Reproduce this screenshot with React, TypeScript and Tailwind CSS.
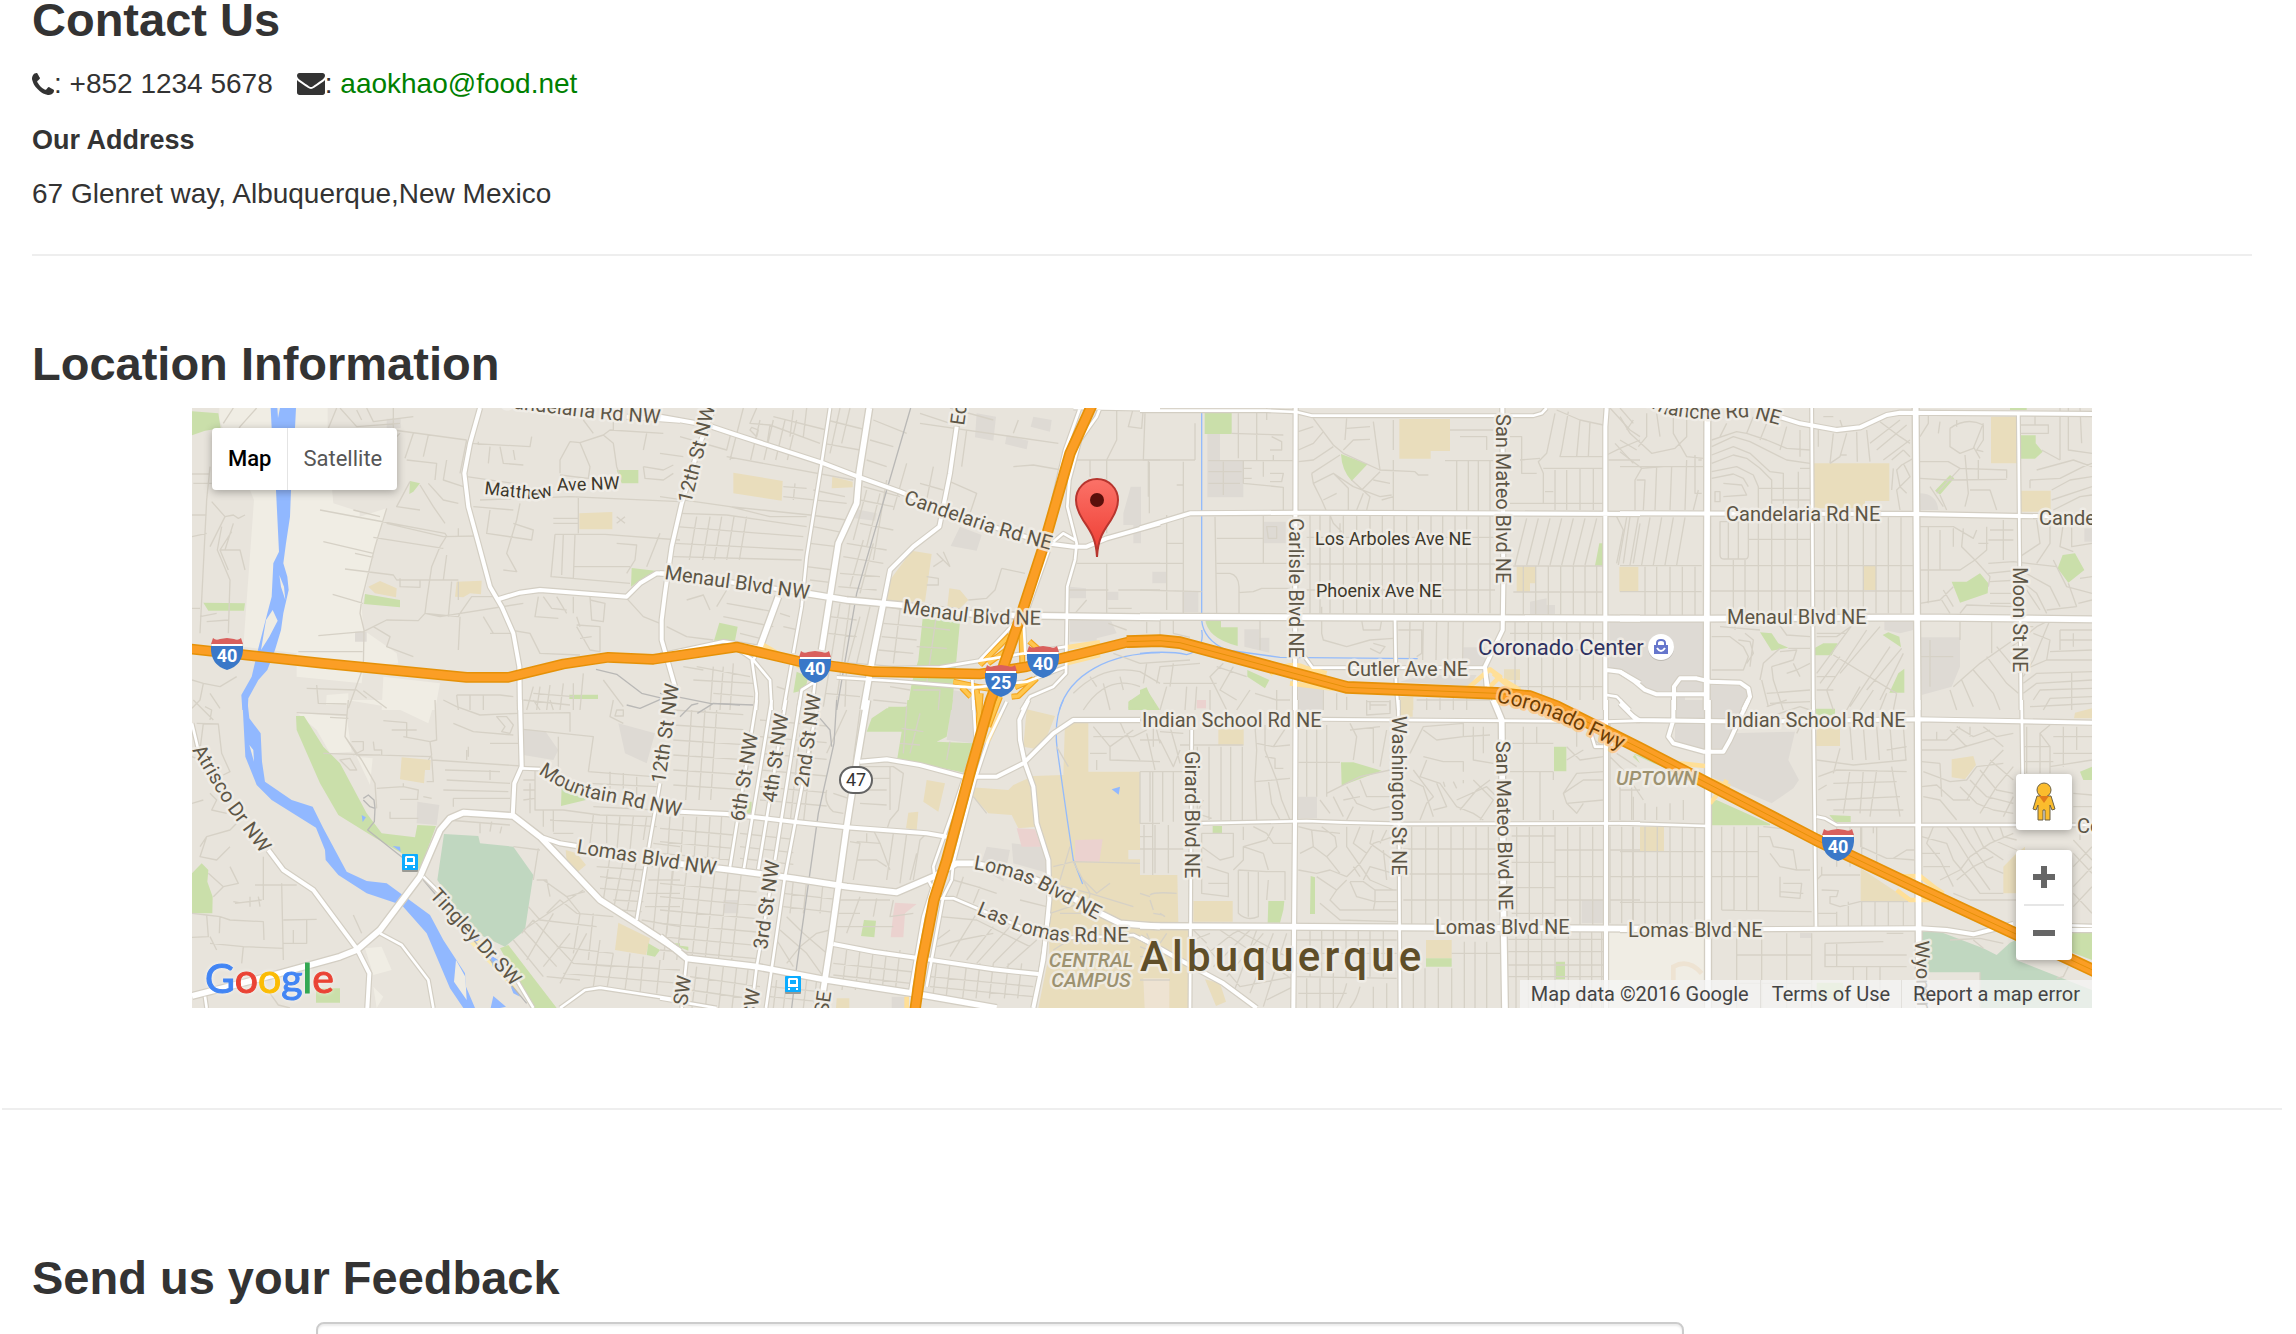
import React from "react";

/* ---------- Map data ----------
   The drawing is stored as eight sheets (4 columns x 2 rows) at three units per pixel. */

const vs = (xs: number[], y0: number, y1: number, skew = 0) =>
  xs.map((x) => `M${x} ${y0}L${x + skew} ${y1}`).join("");
const hs = (ys: number[], x0: number, x1: number, skew = 0) =>
  ys.map((y) => `M${x0} ${y}L${x1} ${y + skew}`).join("");

type Sheet = {
  x: number;
  y: number;
  light?: string;
  grey?: string;
  park?: string;
  school?: string;
  hospital?: string;
  golf?: string;
  water?: string;
  island?: string;
  canal?: string;
  rail?: string;
  minor: string;
  thin: string;
  mid: string;
  wide?: string;
};

const sheets: Sheet[] = [
  {
    x: 180,
    y: 400,
    light:
      "M118 24H443V120L460 310L539 335V350L620 325L585 440L545 620L550 690L650 760L655 790L550 800L545 850L350 830V760L190 740L222 300L210 270L118 60ZM610 830L780 850L765 930H605ZM440 885L505 880V915H438Z",
    grey: "M620 56h42v28h-42zM525 695h35v30h-35z",
    park: "M36 34L115 40L122 85L75 92L36 106ZM70 608L195 610L192 632L85 632ZM555 582L660 600V622L552 612ZM690 243L720 250L700 275L688 282ZM1310 210H1375V250H1325ZM1355 504L1425 512L1380 540L1353 560ZM1168 884h86v13h-86z",
    school:
      "M1198 340L1297 336V388H1198ZM565 560L600 543L650 565L648 592L585 580ZM830 545L905 542L903 583L870 580L850 592L825 590Z",
    water:
      "M272 24L348 24L345 84L333 270L330 350L318 430L310 490L322 530L326 570L310 640L303 690L285 750L262 810L235 840L205 895L203 930L187 930L184 885L215 830L235 745L262 640L275 590L280 490L297 455L288 270L275 84Z",
    island: "M278 630L293 662L268 710L243 750L258 660ZM298 525L312 560L316 600L303 560ZM292 24h8l-6 30z",
    minor:
      "M160 24L130 70M230 24L180 80L165 110M90 200L80 300L60 700M40 250H95M36 222H90M36 345H80M36 410L80 400M95 305L135 350L160 345L175 355L195 345M135 350L90 440M125 380L112 450L150 540L145 700M160 370L135 450M155 395L120 450L145 510M120 450H180L195 510M60 650L110 640M80 665L145 660M36 625H60M445 85L470 24M480 24L530 80L660 70M530 30L545 60M560 24L580 65L700 50M640 24V90L860 120M500 90L620 90M700 100L675 175M745 105L730 170M860 120L840 220M680 180L770 190L765 240M690 245L650 320L720 330M720 255L760 320L795 370M745 250L790 300L835 310M800 180L790 240L850 260M420 330L580 360L795 400L800 408L780 440L755 500L740 600L735 640M520 330L600 350M430 425L580 460M525 460L580 472M495 507L640 525L650 540L835 540M580 412L790 445M620 370L790 410L890 408M660 535V560L720 562V540M800 465L790 540M835 545V600M835 385V410M458 583L550 610M620 325L585 440L545 600L540 640L552 690L550 800L505 925M415 707L550 695L580 680L620 660L715 662L735 640L835 650L840 640L875 590L950 590M580 680L630 710L620 740L700 770M735 640L780 650L1030 610M815 545L805 650M840 650L835 750M355 755H548M870 130L1050 140L1055 110M895 125V135M930 140L925 190M960 140L970 190L1030 195M1000 150L1005 180M860 230L1000 250M900 300L1170 290L1500 305M880 320L1000 330M930 330L920 400L1055 420L1060 390L1000 370M1020 310L1010 360L980 460L1010 515L970 510M1195 290V400M1120 355H1195M1120 370H1195M1125 403H1275L1500 420M1125 403L1113 530L1180 535L1185 403M1150 403L1145 525M1180 500H1350M1115 530L1350 550M1440 400L1400 500M1310 430L1370 435L1365 480L1340 520M1310 350L1335 370M1335 350L1310 370M1170 125L1200 128L1270 105L1300 130L1310 200L1325 240M1170 125L1140 180V220M1200 128L1230 200L1225 235L1140 225M1270 105L1290 90L1450 100M1390 200L1450 210L1480 195M1390 200L1395 235L1450 240L1480 220M1300 90V50M1400 100L1390 150M1240 100L1210 60M1075 590L1065 650L1135 655M1090 590L1115 625L1160 630M1130 590L1160 640M1230 590L1235 660L1270 665L1275 610L1230 600M1180 590V640M1200 680L1190 650M1340 595L1390 650L1440 670M990 690L1050 700L1080 760L1200 765M1190 680L1230 750L1260 755V680L1190 675M1200 715L1235 710M380 865L530 870L560 895M410 855L415 910L500 912M550 872L620 925M640 120L660 100M36 840L70 850L60 900L36 925M70 850L120 860L170 830M90 880L120 925M830 885H960L1000 890M835 930L830 885M870 885V930M910 885V930M1060 860L1040 930M1080 860L1070 930M1110 855L1100 930M1150 850L1140 930M1180 850V930M1060 880L1180 890M1270 840L1330 920M1210 820L1200 930M930 700H1000M910 650L940 700",
    rail: "M1248 808L1310 823L1385 880L1448 895L1380 925L1340 915",
    thin: "",
    mid: "M900 24L870 130L853 220L865 320L895 430L930 560L965 620L1000 700L1018 800L1020 930M957 597L1020 578L1080 570L1340 590L1380 550L1430 520L1500 522M1340 50L1500 62",
  },
  {
    x: 660,
    y: 400,
    grey: "M950 40L1008 50L1000 122L945 112ZM1040 105L1105 122L1100 148L1035 132ZM1120 50L1175 60L1170 95L1112 80ZM590 328L650 340L645 362L585 355ZM900 380L965 405L950 452L872 438ZM1412 260H1443V430H1420V375H1390V340ZM1230 560L1278 565V595H1230ZM1230 655H1350L1370 700L1310 715V725H1230ZM1340 575h35v25h-35zM875 870L940 880V930H870Z",
    park: "M788 655L900 665L875 930H742L755 850L775 780ZM178 668L233 680L225 722L162 722ZM410 815L445 830L435 870L400 878ZM1405 905L1460 868L1500 930H1405ZM685 920H740V930H685Z",
    school:
      "M220 218L368 243L365 302L220 280ZM517 230L578 245V262L515 265ZM755 452L815 462L795 605H680L690 540ZM868 565L900 570L925 600L900 625L862 620Z",
    canal: "M1500 758C1350 760 1230 820 1198 930",
    rail: "M752 24L590 580L530 930M0 880L150 910L280 915",
    minor:
      vs([110, 150, 185, 222, 260], 350, 480, -22) +
      vs([300, 340, 375, 410], 60, 180, -28) +
      "M250 24L210 180M290 24L270 70L330 75L480 130M270 90L290 110L295 90L275 82ZM340 50L500 90M400 30L390 110M440 24L430 110M330 75L320 140M0 160L70 170M60 110L200 150L215 90M200 170L580 240M0 290L210 320M210 320L450 345L560 360M60 340L200 345L440 380M210 320L330 350L440 350M50 380L430 410M45 430L430 450M40 470L425 480M370 260L440 265M405 250L400 300M370 290L560 310M460 270L555 290M460 380L560 400M450 430L530 440M440 500L520 510M450 540L515 548M540 24L510 160M570 24L545 130M500 60L620 90M490 130L600 150M640 60L740 100M630 120L700 140M620 180L680 200M610 260L720 290M600 300L700 320M600 370L700 390M560 430L680 450M550 470L670 490M540 520L660 530M535 560L650 570M620 270L580 420M660 280L620 440M740 190L700 330M680 240L640 480M610 420L570 560M640 430L600 580M780 70L1195 130M780 40L900 80M920 90L905 200M870 245L950 280L930 340M820 200L800 300M780 250L850 270M870 24L1000 60M1060 200L1120 195L1205 210M1075 60L1060 100M850 455L870 500M800 530L835 535V555H800M830 460L850 480L820 500M870 500L840 470M1025 505L1095 520M1025 505L1005 570L980 595L925 600M1240 180H1500M1370 24V120L1340 180V400M1290 180V230M1465 180V290M1450 24L1445 85L1405 80L1420 24M1250 490H1500M1340 490V640M1225 570H1345M1375 570H1500M1345 625L1415 625M80 600L130 585L150 630M130 585L115 590M20 680L80 710L160 720M200 610L340 635M190 650L340 680M240 700L320 720M170 620L200 570M360 640L390 650M370 680L415 690M540 610L490 920M570 610L530 900M510 650L590 660M505 700L590 710M560 790L555 920M495 880L600 890M600 650L560 800M630 620L590 790M680 620L780 640M670 670L780 680M665 710L770 720M655 750L760 760M720 630L700 790M690 860L750 870M640 900L740 910M160 800L150 930M190 800L180 930M220 790L210 930M110 800L270 830M100 840L280 850M160 880L280 890M70 800L130 810M350 860L380 870M1245 640L1280 600M1240 880Q1330 790 1440 815L1500 850M1270 930Q1340 820 1440 860M1330 850L1350 930M1290 830L1310 860M1380 830L1390 870M780 680L870 690M770 740L860 745M755 800L850 800M830 640L800 850M760 870H840L835 930M1360 760L1440 790M1345 670L1400 690",
    thin: "M510 24L485 188L440 470L425 620L400 760M355 590L300 740L280 780L330 840L335 930M275 775L290 880L288 930M230 745L280 780M395 790L370 930M415 930L425 870L465 845L455 930M1260 24L1215 150L1180 300M1320 24L1310 50L1260 120L1228 240L1222 320L1250 430L1245 480L1222 560L1218 820L1180 860L1110 890L1085 930M1180 425L1210 400L1245 420M0 765L190 724L300 742M530 792L700 805L840 802L940 785L1080 762L1218 740M530 832L700 843L940 863L1100 845L1218 800M1240 24L1500 28M955 785L1040 695L1080 650M1090 650L1096 765M937 840L940 920V930M1170 440L1095 650",
    mid: "M0 50L140 75L230 105L485 188L600 232L720 275L900 350L1160 430L1240 440L1280 440L1340 415L1500 370M890 80L870 220L838 380L760 440L690 510L670 610M0 520L200 545L440 580M155 40L120 130L65 310L35 440L15 580L5 660L5 720L45 860",
    wide: "M628 24L598 215L590 310L535 430L510 590L485 750M440 580L560 600L720 615L960 645L1500 652M670 610L640 760L610 930M355 590L300 740",
  },
  {
    x: 1140,
    y: 400,
    grey: "M202 100h38v80h70v112H202ZM372 365h65v65h-65zM37 515h42v35H37zM127 575h48v62h-48zM313 688h45v25h30v45L313 740zM1170 605l50-10v20h25v28h-75zM1408 660H1500V860L1408 810ZM475 860H548V930H475ZM970 742h65v55h-65zM780 845L850 825H1010L990 858Z",
    park: "M194 35H275V102H194ZM603 162L683 192L635 243Q605 210 603 162ZM195 655H243V682H293V738Q200 715 195 655ZM322 810L388 840L375 865L322 830ZM1378 430H1390V497H1365ZM0 870L20 862L48 930H0Z",
    school:
      "M778 57H930V153H872V176H778ZM1130 500H1187V550H1170V575H1130ZM1438 500H1495V575H1438ZM1092 808H1140V840H1092ZM775 890H820V930H775Z",
    canal: "M185 34V660Q190 720 260 750L420 772L833 776M0 760Q90 752 140 764Q195 750 185 690",
    minor:
      vs([510, 540, 570, 610, 650, 690, 727, 762, 800, 835, 873, 908, 945, 980, 1015, 1050], 345, 640) +
      hs([412, 492, 570], 500, 1065) +
      vs([950, 985, 1015, 1050], 180, 335) +
      vs([1150, 1187, 1225, 1262, 1300, 1335, 1370], 500, 645) +
      vs([1160, 1195, 1230, 1265, 1300, 1335, 1370], 355, 495, -35) +
      hs([498, 576], 1120, 1390) +
      vs([810, 850, 890, 925, 970], 660, 780, -2) +
      vs([1125, 1165, 1205, 1240, 1280, 1320, 1360], 665, 900) +
      hs([700, 750, 860], 1110, 1390) +
      "M15 40L10 180H165M165 70V180M130 185V640M28 185V340M0 490H130M130 255H110M0 570L185 575M80 345V630M80 430H130M295 40V175M350 34V180M275 100L430 105M205 182H460M205 215H305M205 250H300M250 185V285M310 180V250L430 262V330M310 205H335M310 235H335M370 185V230M390 150H425V125L395 110M390 220H430L425 245H390M400 165V180M380 24V60M225 350L230 640M370 345V490M230 490H460M230 415H370M230 520H270Q295 525 297 560V640M295 578L340 575L365 565H450M380 380H410V415H385ZM520 55L580 135L610 160L720 210L825 215L835 225H865M475 95L520 80M475 150L520 130L550 95M475 185L520 180L580 140M515 220L600 165M515 220L520 250L545 300L560 335M520 250L580 220L640 260L720 290L755 285M580 220L625 265V330M550 300L590 280M620 55L615 120M620 85L690 80M700 65L710 140L720 210M610 150L640 120L690 118M635 240L690 290L680 330M665 270L720 215M700 240L750 250M650 330L670 280M760 180V330M760 60V150M725 300L760 290M930 90H1060M915 182H1060M960 110H1040V150M1110 110H1145V220H1190M1140 180L1200 175M1245 40L1220 160L1195 185L1210 220V310M1285 35L1265 150L1260 170H1390M1320 60L1310 170M1350 65L1345 170M1250 30L1320 60L1390 75M1210 205H1390M1215 275H1240M1110 310H1390M1245 210V330M1280 210V330M1320 205V330M1360 205V330M570 345L580 370L605 395M600 370V400M545 620V700L550 720L620 740L690 720L760 715M665 660L670 690H720L725 660M700 730L735 740L720 760L690 745M775 690H845V760L830 770M360 660V750M20 665V700M60 660V710M100 660V700L150 712M0 790L150 780M20 790L10 850M50 850L60 800L180 790M70 850H230M100 790L90 860M60 930L80 860M140 860L135 930M170 860L165 930M210 870V930M250 790L210 830L260 930M280 800L240 870L290 900M330 870L290 930M230 800L320 830M345 880L410 900V930M410 870V900H450M550 870V930M590 880V930M620 890V930M680 905H750V930M690 905V930M830 900H1050M860 895V930M900 895V930M940 895V930M980 895V930M1400 165L1440 145L1500 120M1410 24L1470 90L1500 110M1440 24L1480 70M1405 180H1500M1425 130L1480 190M1430 350L1450 390L1430 490M1470 350L1450 490M1500 370L1480 490",
    thin: "M0 32H380L470 36L515 47H1180L1205 40L1220 24M490 765L518 803H1035M765 655L768 850L775 930M1035 800L1045 860L1075 930M1400 885L1430 890L1470 930",
    mid: "M0 385L150 340L500 338L1500 342M1087 24L1090 550L1088 690L1035 800L1040 860M1400 24L1396 80V930M1400 810L1440 815L1500 850M467 24L465 930",
    wide: "M0 650L1500 656",
  },
  {
    x: 1620,
    y: 400,
    grey: "M0 662H245L260 690V885H110L45 845L0 815ZM170 890H195V930H170ZM270 852H360L388 870L380 905L360 930H270ZM898 280Q950 280 955 330H898ZM897 712H1020V800L995 860L905 885ZM793 660H880V690L840 700L793 690ZM1393 385h23v40h-23z",
    park: "M1203 106H1247V130L1268 155L1245 176H1203ZM945 272L990 225L1003 235L960 284ZM420 697L455 700L475 730L505 743L455 752ZM583 745L610 730H653L635 766H583ZM788 705L805 697L838 710L843 742ZM853 806V878H808L835 820ZM995 545H1040L1080 520L1105 550L1103 580L1020 608ZM1313 505L1328 465L1365 460L1393 510L1345 548ZM1170 24h50v6h-50z",
    school: "M582 190H808V303H735V325H582ZM1113 50H1190V190H1113ZM1203 272H1292V335H1203ZM730 495H768V570H730Z",
    minor:
      vs([340, 375, 415, 455, 495, 532], 480, 640) +
      vs([613, 650, 685, 730, 768, 805, 843], 352, 640) +
      vs([415, 455, 495, 532], 352, 480) +
      hs([497, 573], 270, 880) +
      vs([75, 110, 150, 187, 225], 500, 645) +
      vs([20, 55, 90, 125, 160, 195], 352, 495, -25) +
      hs([497, 575], 0, 245) +
      "M300 365V465Q300 478 315 477H375Q385 477 385 465V365ZM325 365V475M355 365V475M385 418H570M0 50L30 100L95 160L165 145L200 110V40M80 40V110L55 140M160 40V100L200 170L250 175M110 40L120 110M40 60L20 90M0 120L50 150M0 155L65 205L45 240V330M0 200H250M65 205L130 200M50 240L75 240L70 330M110 200L105 330M155 200L150 330M200 180L195 330M225 165V280H245M235 180H245M235 270L220 330M275 140L340 110L390 125L500 180L570 190M275 120L350 95L380 100L440 120L500 145L570 150M275 165L340 140L390 160L450 215L490 220V330M275 190L340 165L380 175L420 205L455 240V330M275 215L350 200L400 225L415 260V330M275 235L340 222L370 235L385 260M285 275H300V305H285ZM310 250L365 255L380 285L310 290M320 70L300 110M400 50L380 100M440 70L420 120M500 80L480 150M540 90V170M535 215V330M415 265H570M455 300H570M540 205H570M595 80V140M640 100L630 190M680 100L660 170L630 190M660 165H680M710 95L712 185M740 90L750 185M780 65L840 110L870 130M840 60L750 130M860 75L770 150M870 120L790 180M850 150L870 170M660 60L670 90M610 50H640M880 175L845 195L830 210L840 260L860 280M850 190L870 230L830 270L840 330M815 180L850 150M820 205L815 270M925 45V70L900 110M960 65L955 100M990 85Q1040 50 1090 75V120L1070 150L1090 155M990 85V140L1020 160L1060 145L1090 70M1060 140L1080 175M1010 60V80M900 185H985L1020 205L950 280M1035 165L1045 280L1035 320M1020 205L1160 210V235M900 235L980 240L1160 238M1050 270H1110L1130 330M1075 180V240M960 285L980 330M930 260L970 320M1203 75H1285V100H1203M1245 45V75M1320 24V180M1345 24V150L1416 160M1380 24L1385 130M1265 150L1320 180M1250 210L1360 180L1416 200M1230 240L1320 235L1390 200L1416 190M1230 265V240M1295 270L1350 240L1416 230M1295 300L1416 260M1300 330L1380 290L1416 285M900 380H1000L1060 415L1070 390M1030 385L1025 440L1065 480L1100 450V380M960 390V510M925 380V610M1000 385V440M900 510H1020L1065 480M1065 480L1110 530L1105 560M1105 420H1180M1075 430H1105M1150 360V480M1110 390H1180M1250 360L1260 430L1200 470M1290 360V430L1250 490M1330 370L1320 440L1360 455M1355 380V440L1416 430M1105 490L1180 485L1310 500M1105 520L1200 510L1290 560L1320 620M1110 545L1200 540L1250 580L1280 640M1110 580H1180M1110 610H1180M1220 570L1260 630M1345 550L1370 620M1300 480L1340 560L1416 580M1380 535L1416 530M1375 610L1416 600M900 610L960 600L1000 560M965 600L990 640M970 570L1000 620M1020 640L1040 615L1180 620M1280 630L1370 620M275 710H330L370 740L385 770L370 810H275M355 720L390 725L400 760L380 790M300 680L420 690M345 660V690M375 700L400 720L390 800M475 670L500 705L570 710M505 745H570M420 840L430 790L480 745M455 800L520 780L530 750L480 755M425 840L445 920M455 800L460 840L490 930M520 790L540 830M500 820L530 810L570 790M440 880L570 870M450 910L570 905M590 710H650L720 660M590 700H680M640 765L830 880M700 670L590 820M740 690L620 870L640 930M780 680L660 820M810 740L690 920M845 745L740 870M850 760L780 900M660 770L600 850M590 830H645M590 870H640M720 860L680 930M760 870L720 930M800 880L780 930M830 880L820 930M1020 660V720M1115 665V760M900 770H1000M930 720V860M1210 680H1240M1175 740L1250 680L1290 660M1000 860L1080 790L1180 720M1060 810L1120 880L1140 930M1100 770L1160 850L1195 880M1130 740L1180 800M1025 840L1060 920M1290 660L1240 780L1210 830M1240 700L1290 720L1280 780L1210 810M1320 690H1416M1320 720H1416M1290 755L1416 750M1280 780H1416M1320 690V750M1360 700V740M1210 850L1250 820L1416 815M1210 880L1250 850L1416 840M1240 900L1260 870L1416 865M1270 930L1290 895L1416 890M1355 815V930M990 870L1010 930",
    thin: "M575 24L580 930M1195 40L1203 930",
    mid: "M0 340L887 342L1196 348L1416 350M460 45L540 70L650 90L720 82L800 45L840 38L1416 42M0 815L45 845L75 870L110 883H260M162 930V860L180 835H230L270 845L360 848L385 865L390 890L370 930",
    wide: "M262 40L260 930M887 24L893 930M0 656H260L887 652L1416 658",
  },
  {
    x: 180,
    y: 700,
    light:
      "M500 0H765L745 70L650 25ZM350 38L500 50L515 155L450 160L410 90ZM530 170L578 175L570 255ZM555 745L605 740L635 810L580 825ZM580 860L610 890L590 924Z",
    grey: "M712 305L778 315L770 375L710 370ZM1030 88L1097 95L1135 150L1120 180L1030 165ZM1315 70L1425 100L1400 190L1335 160Z",
    park: "M348 48H372L430 140L480 190L560 340L605 400L705 412L712 375L768 378L720 510L665 460L580 410L475 345L420 250L350 90ZM36 520L65 490L85 510L82 545L98 590L97 640H36ZM1145 255L1218 290V300L1143 318ZM985 735L1130 924H1060L960 745ZM408 865H480V908H408ZM1405 730L1440 750L1425 770L1400 765ZM1475 730H1500V750Z",
    school:
      "M665 172L752 180L750 210L735 210L732 250L660 238ZM1315 668L1410 715L1398 765L1305 750ZM1157 450L1190 460L1218 495L1190 518L1160 485Z",
    golf: "M792 402L895 408L900 430L1000 440L1060 525L1035 690L975 740L870 690L772 540Z",
    water:
      "M187 0H202L208 55L242 100L246 185L255 245L335 300L398 320L430 385L500 515L560 543L620 550L750 645L790 720L855 820L858 860L885 924H850L810 865L740 700L665 615L560 580L475 525L437 480L435 450L408 383L275 300L230 255L196 170ZM545 345L558 352L548 366ZM638 438L660 440L662 455ZM930 765L970 790L965 820L935 795ZM985 840L1020 890L1000 880ZM940 888L978 920L960 924H932ZM860 700L900 710L890 730Z",
    island: "M208 135L220 150L222 185ZM828 780L856 830L860 900L822 845Z",
    rail: "M550 295L565 285L582 300L585 325L570 320L550 300M585 325L583 365L563 390L670 475M730 540L1040 910",
    minor:
      "M40 0L100 60M75 20L95 30L90 60M50 70L115 72L125 160L150 215L130 225M70 70L60 150M36 170L90 190M90 280L110 300L95 330L140 340M36 310L70 300M60 440L80 410L150 390L170 370M80 410L60 470L110 480L150 440M85 520L130 560L175 550L150 500M130 560L100 590M250 470V600M165 610L245 600M210 590V620M160 605L190 610M225 555H350M305 550L310 780M235 590L240 620M36 640L80 645L85 710L36 712M80 645L120 650L150 660L250 665L252 720M120 650L118 700M90 730L190 740L310 745M90 710L110 750M310 660L410 658M340 690V730M380 660V730H310M190 740L185 790M520 645L545 700M270 880L295 915L330 924M505 0L495 110L530 165H600M350 38L500 45M450 52L505 55M610 62L680 68V110M635 90H710M670 110L750 125L770 120L765 0M750 125L755 165L745 180M495 110L545 180M515 125H550V150L520 165M580 125L583 150H605V165M545 180L585 250L590 325M430 160L755 170L760 245H740M480 180L510 175L530 210H510ZM590 265L670 260L715 270L712 300M670 260V250M660 298H715M630 335V355H715M730 290L755 295M755 180L1025 198M795 210L960 215M800 240L990 250M790 270L985 275M820 295H990M860 150V180M820 70L880 95L1000 105M930 130L1015 130M865 140V170M830 20L900 45L1015 40M790 0L830 20M930 210V240M950 50L975 80L965 95L990 100L1000 75L980 50ZM820 295V320M900 370V400M935 365L930 395M965 380L960 400M800 360L990 375M1030 0L1170 15M1030 40L1170 38V95M1060 0L1080 30M1110 0L1120 30M1310 30H1330V48H1305ZM1300 0L1290 50L1330 70M1030 88L1240 110L1225 215M1030 240H1065M1030 270H1065M1030 300L1065 295M1065 210V330L1150 330M1135 110V230M1050 250V340M1090 330V380M1120 330V395M1225 215L1420 230M1225 250L1430 260M1240 320L1430 330M1290 215V270M1330 220V280M1370 230V290M1150 330L1260 345L1420 350M1110 360L1430 380M1120 400H1180M1240 345L1230 430M1280 345V430M1320 345L1310 460M1360 350L1350 450M1400 350L1390 420M1250 500L1395 510M1260 530L1395 545M1260 565L1390 575M1300 600L1390 605M1320 630L1385 635M1290 470L1270 600M1330 480L1300 630M1370 480L1340 640M1420 430L1500 440M1415 500H1500M1405 540H1500M1400 580H1500M1395 620H1500M1385 660L1500 680M1440 480L1420 690M1480 480L1460 700M1000 440L1080 450M1075 445L1060 540M1070 540H1100L1110 590M1090 540L1160 590L1215 575M1030 690L1210 570M1025 700L1060 660M1045 620L1080 660L1250 680M1100 640L1140 600L1190 640L1300 650M1160 590L1200 640M1200 640L1180 760M1240 640L1225 780M1060 660L1180 790L1300 800M1030 690L1130 800M1000 720L1090 830M1120 640L1040 780M1170 700L1090 800M1220 700L1140 850M1260 720L1240 860M1300 760L1280 870M1350 760L1335 870M1390 770L1380 880M1440 780L1430 880M1130 740L1300 760M1180 790L1500 810M1150 820L1500 850M1100 830L1200 840",
    thin: "M36 70L55 150M1025 205L1080 207M1440 250L1410 420L1370 660M730 530L790 590M1010 840L1060 924M1140 924L1215 870L1260 863L1500 900M75 890L80 924M600 700L665 735L745 840L760 924",
    mid: "M265 450L310 510L400 570L530 745L568 820L562 924M1080 410L1140 430L1190 438M1020 0L1025 200L1003 250L998 350",
    wide: "M36 888L300 820L480 770L530 750L600 690L720 530L780 390L810 355L850 338L1000 348L1080 410L1260 600L1370 670L1500 755",
  },
  {
    x: 660,
    y: 700,
    grey: "M1055 430L1145 440L1165 520L1060 490ZM980 440L1050 450L1030 545L960 500ZM875 0H940V130L860 120ZM190 600H235V640H190ZM695 890h50v34h-50z",
    park: "M742 0H878L860 110L830 125L940 130L912 218L712 175L725 95H620L635 55L680 25L740 20ZM1410 0H1480V30L1405 25ZM612 660L648 662L643 712L603 708ZM45 735L85 740V752ZM260 305h15v35h-15z",
    school:
      "M1100 28L1185 48L1145 150L1090 140ZM1120 228L1210 225L1215 66H1285V215H1440V450H1405V478H1440V525H1500V924H1135L1168 760L1165 480L1130 380L1075 385L1055 345L985 340L935 285V262L1045 270L1060 255ZM800 240L855 250L835 335L790 305ZM745 338L775 335L770 390L738 385ZM530 895h38v29h-40z",
    hospital: "M1070 385L1125 388L1145 440L1085 440ZM1245 420L1328 418L1318 485H1245ZM705 608L770 612L735 640L730 712H692L700 640Z",
    water: "M1355 268L1380 260L1376 284Z",
    canal: "M1210 0Q1180 60 1192 150L1222 360L1240 480L1268 552",
    rail: "M530 0L522 130L475 340L410 800L395 924M480 55L510 90L515 140M60 50L95 15L115 10M112 40L160 10L240 15",
    minor:
      vs([95, 135, 170], 30, 300, -18) +
      vs([30, 70, 110, 150, 185], 350, 480, -8) +
      hs([30, 75, 120, 165, 210, 255], 40, 250, 14) +
      hs([385, 425, 460], 0, 220, 20) +
      hs([60, 110, 160, 210, 260, 300], 300, 500, 18) +
      hs([400, 440, 475], 240, 400, 18) +
      hs([550, 590, 630, 670, 710, 750], 0, 290, 26) +
      vs([40, 80, 125, 165, 205, 245], 510, 780, -30) +
      vs([110, 150, 190, 230, 265], 800, 924, -14) +
      hs([830, 870], 90, 300, 30) +
      hs([580, 620], 370, 530, 18) +
      vs([400, 440, 490], 540, 640, -10) +
      vs([420, 460], 100, 370, -30) +
      vs([350, 380, 440, 470], 840, 924, -10) +
      hs([860, 890], 330, 470, 14) +
      vs([560, 600, 640, 680, 720], 750, 870, -14) +
      hs([790, 825], 520, 760, 26) +
      vs([830, 870, 920, 960, 1000, 1045, 1085], 790, 895, -12) +
      hs([830, 860], 810, 1120, 30) +
      "M560 30L500 160M600 30L580 180M500 270Q490 310 520 335L550 340M520 280L580 300M610 200H700L730 220L715 330L690 360L680 390M610 235H690M605 270H680M600 310L680 315M690 200V330M740 20L730 160M725 85L790 95M720 130L780 135M780 40L750 160M870 125L860 180M640 390L660 430L590 425M570 425L600 430L580 540M590 480H650L680 500M660 430L690 510M620 425V400M700 400L680 540M740 400L720 550M760 540L780 420L800 400M750 540L770 460M600 590L560 700M650 595L640 650M530 600H690M525 640H600M520 680H700M700 600L690 650L760 640M380 650L430 700L500 760M360 690L440 760L490 830M350 720L400 800M380 790L420 740L470 700L510 690M1190 140L1225 200M940 290L980 340M880 540L950 560L1010 580M910 530L890 590M960 560L940 610M840 650L950 660L1110 740M950 640L870 770M1000 680L920 780M1050 680L950 790M1090 700L1000 790M1130 720L1040 800M830 740L900 720L1000 700M1080 600L1160 620M830 720L870 690M1180 500L1240 485L1440 490M1230 440L1200 540L1170 580M1240 485L1290 580L1420 620M1270 540L1310 580L1350 550M1175 550L1290 580L1280 640M1200 640H1270M1170 640L1290 600M1180 750L1260 700M1440 215V370H1478V525M1440 370H1500M1478 215V370M1440 410H1478M1300 80L1350 140L1420 90M1300 110H1420L1460 90M1350 140V180L1500 185M1290 160H1340M1400 100L1440 180M1380 66L1395 100M1310 180V210M1480 80V140",
    thin: "M290 0L210 500M335 0L252 505M378 0L295 508M420 0L345 480M475 0L375 530L318 924M340 515L290 800L275 924M80 775L65 924M0 895L170 924M840 595L880 595L1080 680L1180 715L1330 710L1420 705L1500 745M960 90L880 330L820 500L825 540L790 650L750 880M1040 5L985 120L945 240L880 490L875 540L850 590L800 860M940 0L948 130M805 540L815 560M1168 640L1140 820",
    mid: "M600 185L680 178L780 195L910 230L1010 230L1090 190L1180 100L1240 60H1440M1105 0L1078 60L1080 120L1095 190L1120 260L1130 370L1165 480L1168 600L1150 780L1120 924M60 335L200 342L400 365L560 382L800 400L860 410M520 732L640 755L800 778L1000 808L1135 822",
    wide: "M622 0L590 190L560 380L535 560L510 740L490 870L480 924M0 485L200 508L400 535L560 560L710 577L820 530L890 490L940 490L1080 520L1200 570L1300 630L1380 670L1500 680M0 710L80 775L290 800L500 840L760 880L1010 924",
  },
  {
    x: 1140,
    y: 700,
    light: "M1403 692H1500V924H1403Z",
    grey: "M475 0h72v28h-72zM473 290h58v65h-58zM1325 600h68v70h-68z",
    park: "M603 187H640L725 212L605 257ZM1242 140h37v74h-37zM218 378h28v22h-28zM512 528L525 532V642H510ZM385 603H433L430 630L420 668H383ZM858 775h77v25h-77zM1247 785h28v53h-28zM0 0H35L48 28H0ZM1485 165L1500 190L1478 170Z",
    school:
      "M235 88h76v48h-76zM0 525H112L115 668H0ZM160 603H278V665H160ZM0 690H145V924H0ZM858 720h77v55h-77zM195 838L240 850L258 905L228 918ZM780 0h38v50h-38z",
    hospital: "M170 0h28v25h-28z",
    minor:
      vs([172, 207, 243, 272, 307], 140, 360) +
      vs([30, 68, 100], 215, 365) +
      vs([12, 45, 85], 375, 520) +
      vs([815, 857, 895, 933, 970, 1008, 1045], 380, 675) +
      vs([1130, 1168, 1208, 1245, 1283, 1320, 1358], 380, 675) +
      hs([447, 522, 600], 790, 1075) +
      hs([408, 487, 563, 640], 1115, 1245) +
      hs([450, 530, 600], 1245, 1390) +
      vs([973, 1005, 1040], 725, 924) +
      vs([510, 545, 580, 618, 655, 690, 730], 690, 830) +
      vs([820, 855, 895, 935], 805, 924) +
      hs([760], 935, 1085) +
      vs([1128, 1165, 1205, 1245, 1285, 1320, 1355, 1385], 695, 924) +
      hs([718, 755, 795, 830], 1105, 1390) +
      hs([720, 760], 470, 770) +
      hs([447], 0, 130) +
      hs([215], 0, 130) +
      hs([187], 475, 600) +
      vs([500, 530, 560], 75, 290) +
      "M0 120H60L100 200L120 150M20 100L45 210M0 60L45 70L60 130M90 80L110 150L120 190M60 95L130 100M120 135H310M190 300L170 340L215 355M345 80L350 150L345 240L350 360M375 75V150L410 240L425 300L450 360M350 130L400 140L450 135M375 170L405 175V205H430M345 245L450 235M385 240L395 310L420 360M440 80L400 140M630 90L720 80M630 70L650 110L640 180M700 80V190M740 90L720 200M560 280L660 230L750 210M580 290L610 350M620 260L650 310L700 330L750 320M660 240L680 290L760 290M540 300L570 340M640 320L620 360M610 300L660 290M810 160L850 80L970 70V110L890 120L850 90M850 170L910 185H970V215M820 210L880 290L860 310L840 360M810 240L850 260L880 350M860 180L840 230L900 250L950 320L1000 340L1030 360M890 250L920 320L880 330M950 300L1040 260L1080 300M960 330L1010 270L1050 240M910 245L915 260M940 245L950 265M970 250V240M1020 360L1060 300L1000 240M1000 80V180L1060 190M1030 80V160M970 110L1050 105M1110 130H1240M1110 215H1240M1150 80V360M1190 80V130M1200 215V360M1240 215V240M1280 140L1320 180L1390 170M1280 180L1330 150M1390 215L1310 220L1270 280L1280 310L1390 300M1270 280L1330 240H1390M1280 310L1310 340L1330 310M1310 80V140M1240 330V360M1410 70V360M1440 230V360M1475 260V360M1350 110L1390 140M1410 170L1430 190L1470 230M1430 160L1490 200M185 400H280V470L240 480L185 440M185 400V580L265 590V520L200 500M205 550H265M295 510V640Q320 665 355 650V515M325 515V650M295 510L380 515H435V600M370 460L310 440V480L280 510M310 440L380 420L400 380M370 460L385 510M380 400L400 430H455M385 540L380 600M310 380V420M340 380L380 400M475 380L515 390L520 440L560 470L590 440L585 410L545 380M515 390L600 400M520 440L480 460M475 510L530 520L570 510L620 530L660 490L700 430L760 410M560 470L600 520M620 380V440L690 540L760 570M660 380L640 430L680 460M700 390L690 430L760 480M740 390L720 430M530 530L590 570L570 600L600 630H700M590 570L620 540M630 545H670L705 570H770M630 545L650 590L705 605V570M705 605L700 630H770M670 540L690 500L760 520M730 450L740 540M705 605H770M540 610L600 660L770 665M640 500L660 530M160 690L200 730M160 720L210 700M190 770L280 700L300 690M220 800L330 690M260 830L370 700M240 690L460 840M290 690L460 780M200 740L300 860L460 830M350 690L280 880M400 700L330 880M440 700L370 920M460 860L380 900M0 580L30 590M30 585Q40 575 110 580M30 600L40 630M60 640L75 650M40 640L70 645M0 840H90M470 830L770 835M500 835V924M540 835V924M580 835V924M620 850Q610 890 590 924M660 860Q650 900 630 924M700 860V924M740 850V924M475 880H620M1410 380V670M1445 380V670M1480 380V670M1410 450H1500M1410 530H1500M1410 600H1500M680 0V45L750 40V0M690 15H740M0 740L50 760M0 770H60M20 700L60 790M80 700L60 730",
    thin: "M155 90L150 924M775 0L780 924M180 370L500 363L600 367L800 372L1500 370M545 58L1060 62L1398 65L1500 62M1350 90L1365 140H1390M1440 0L1470 40L1500 60",
    mid: "M467 0L465 370L460 924M1398 0V924M0 712L130 785L250 850L350 924",
    wide: "M1060 0L1085 60L1090 620L1095 924M0 678L1500 686",
  },
  {
    x: 1620,
    y: 700,
    light: "M0 700H255V840H0Z",
    grey: "M272 0H380L345 100L310 145H270ZM165 0H262V150L165 130ZM330 100L525 95L505 180L537 240L520 265L455 310L340 260L272 230V160H310ZM540 698h35v16h-35z",
    park: "M40 162L110 170L210 210L220 235L100 190ZM272 305L290 300L450 372V376H272ZM628 345L692 348V366H645ZM1380 215L1416 200V240H1390ZM585 26h60v20h-60zM1358 695H1416V780L1350 755ZM590 848h80v50h-80z",
    golf: "M905 695H960L1090 745L1130 765L1170 728L1188 720V780L1416 870V924H1080V817H905Z",
    school:
      "M590 85H660V138H587ZM995 178L1060 168L1068 195L1035 238L995 232ZM60 380h72v74h-72zM722 505L865 600V606H722ZM1150 580V500L1190 460L1215 440V580ZM1365 38L1416 25V55H1362Z",
    minor:
      vs([38, 75, 112, 150, 187, 225], 380, 680) +
      hs([455, 530, 607], 0, 250) +
      vs([305, 342, 380, 415], 380, 630) +
      hs([455, 530], 275, 415) +
      vs([350, 425, 500, 575], 700, 924) +
      hs([765, 850], 350, 575) +
      vs([690, 730, 770, 810, 850], 80, 180, 8) +
      vs([650, 690, 725, 770], 380, 500) +
      "M40 290V360M75 310V360M0 270H60M110 320V360M150 310V360M190 300V360M30 240L70 300M440 20L500 0M450 50L540 20L570 30M550 60L530 100M590 180L700 195L860 180M595 230L650 210L860 215M660 145L640 220M690 210L670 340M730 210L720 340M770 210L750 350M640 250L830 245M620 300L840 290M640 330L850 330M815 200L840 350M860 140L800 150M595 270L620 255M305 630L575 635M415 410H450L460 440L520 450L530 510H570M430 380L530 390L580 430M450 460L480 500L530 510M480 530V590L540 595L545 550H490M480 575L550 580M605 500V525L590 540M605 525H720M605 570L655 572L650 590H630V610L660 620L720 605H865M650 635V680M685 605V680M725 605V680M765 605V680M805 605V680M850 605V680M590 640L650 640M722 380V440L800 475H820L860 450H885M820 475L885 480M760 380V400M800 700H850M615 730L790 725M615 730V800H860M615 765H860M650 730V800M740 800V924M780 800V924M700 800V840M905 120H980L1020 80M950 95V120M905 150L1000 150L1120 115L1150 140M905 185L960 190M910 215L990 245L1040 240L1070 200L1150 190M1010 80L1060 110L1110 90M1040 140L990 90M1050 80V110M1090 80L1130 110L1180 100M905 260L950 255L1000 300L1050 300M910 290L960 300L1010 360M960 190L965 290M1020 260L1070 310L1120 330L1180 340M1050 240L1100 290L1180 310M1080 210L1130 270L1180 280M1110 180L1180 240M1150 150L1110 190L1070 250L1040 300M1180 200L1130 260L1080 340M1180 290L1150 350M905 410L980 430L1000 480L1050 540L1080 580H1150M940 380L920 430L960 480L1000 560M980 380L1010 420L1060 500L1110 570M1020 380L1050 430L1100 500L1150 520M1060 380L1090 440L1150 480M1100 380L1120 420L1190 450M1140 380L1150 410L1190 420M905 460H960M910 500L990 500M960 540L1020 510L1050 470L1110 430L1180 400M1010 540L1060 500L1120 470M1000 580L1050 600L1190 600M1220 80V220M1260 100V220M1210 140H1290L1260 100L1290 75M1290 140V220M1210 185H1300M1330 80V200M1370 80V150M1300 110H1416M1300 160H1416M1290 200L1416 180M1230 20L1330 15L1416 10M1360 280L1416 285M1360 320H1416M1360 420L1416 480M1360 460L1416 520M1360 500L1416 440M1360 560L1416 500M1360 620L1416 560M1360 580L1416 640M1380 380V420M1060 720L1090 745M990 720L1080 715L1150 730M1080 817V924M1310 835L1330 830L1345 800",
    thin: "M580 0L588 680M1205 0L1208 230M590 350L615 355L650 375H1416M0 370L262 378M1188 672L1416 678",
    mid: "M0 10L50 60L400 65L890 58L1416 68M160 0V60L145 110L160 130L250 155H310L330 120L385 0M0 690L900 685L980 690L1060 703L1180 672M1355 690H1416",
    wide: "M264 0V924M893 0L895 500L897 924",
  },
];

type AreaKey = "light" | "grey" | "park" | "school" | "hospital" | "golf" | "water" | "island";
const areaFills: [AreaKey, string][] = [
  ["light", "#f0ede4"],
  ["grey", "#dedad4"],
  ["school", "#e9ddbc"],
  ["hospital", "#ebd2cf"],
  ["park", "#cadfaa"],
  ["golf", "#c0d7c0"],
  ["water", "#91b8ff"],
  ["island", "#efece3"],
];

type LineKey = "canal" | "minor" | "rail" | "thin" | "mid" | "wide";

function Lines({ k, stroke, w }: { k: LineKey; stroke: string; w: number }) {
  return (
    <g fill="none" stroke={stroke} strokeWidth={w} strokeLinejoin="round">
      {sheets.map((s, i) =>
        s[k] ? <path key={i} d={s[k]} transform={`translate(${(s.x - 180) * 3} ${(s.y - 400) * 3})`} /> : null,
      )}
    </g>
  );
}

const I40 =
  "M30 747L430 790L860 832L985 832L1150 792L1285 772L1420 778L1670 741L1860 785L2080 815L2400 822L2540 800L2740 752L2840 727L2940 722L3000 728L3500 862L3950 880L4050 890L4130 920L4380 1045L4910 1320L5220 1468L5508 1602L5750 1716";
const I40_EAST =
  "M2840 725L2940 722L3000 728L3500 862L3950 880L4050 890L4130 920L4380 1045L4910 1320L5220 1468L5508 1602L5750 1716";
const I25 = "M2738 10L2670 160L2590 440L2515 670L2470 800L2432 900L2375 1100L2300 1380L2262 1500L2225 1690L2205 1830";
const RAMPS =
  "M2400 795L2440 755L2490 705M2425 790L2480 750L2495 715M2524 690L2527 790M2548 724L2580 752M2320 845L2400 862L2440 868M2345 862L2372 890M2390 870L2398 940M2402 880L2394 1000M2570 835L2515 888L2495 890M2505 862L2560 838M2460 890L2425 980";
const PALE_RAMPS =
  "M1750 735L1860 800M2395 940L2385 1050M2460 940L2420 1030M2660 742L2760 727M2660 790L2760 765M3270 822Q3330 780 3380 805L3440 820M3330 850L3460 866M3860 868L3910 825L3930 808L3960 830L3930 860M3940 820L4000 870M3970 840L4020 870M4500 1090L4575 1098M4590 1210L4630 1160L4640 1140M4590 1140L4650 1160M5130 1430L5220 1428L5260 1460L5290 1480M5150 1470L5190 1500L5250 1500M2180 1790V1830";

const roadInk = "#5d5646";

type Label = { t: string; x: number; y: number; a?: number; size?: number; fill?: string };
const labels: Label[] = [
  { t: "Candelaria Rd NE", x: 1726, y: 521 },
  { t: "Cande", x: 2039, y: 525 },
  { t: "Menaul Blvd NE", x: 1727, y: 624 },
  { t: "Indian School Rd NE", x: 1726, y: 727 },
  { t: "Indian School Rd NE", x: 1142, y: 727 },
  { t: "Lomas Blvd NE", x: 1628, y: 937 },
  { t: "Lomas Blvd NE", x: 1435, y: 934 },
  { t: "Cutler Ave NE", x: 1347, y: 676 },
  { t: "Co", x: 2077, y: 833 },
  { t: "San Mateo Blvd NE", x: 1496, y: 414, a: 90 },
  { t: "San Mateo Blvd NE", x: 1496, y: 741, a: 89 },
  { t: "Carlisle Blvd NE", x: 1289, y: 518, a: 90 },
  { t: "Girard Blvd NE", x: 1185, y: 751, a: 90 },
  { t: "Washington St NE", x: 1392, y: 716, a: 90 },
  { t: "Moon St NE", x: 2013, y: 567, a: 90 },
  { t: "Wyoming", x: 1915, y: 941, a: 88 },
  { t: "Menaul Blvd NW", x: 664, y: 579, a: 8 },
  { t: "Lomas Blvd NW", x: 576, y: 853, a: 9 },
  { t: "12th St NW", x: 691, y: 504, a: -76 },
  { t: "12th St NW", x: 665, y: 784, a: -82 },
  { t: "6th St NW", x: 744, y: 822, a: -81 },
  { t: "4th St NW", x: 776, y: 803, a: -82 },
  { t: "2nd St NW", x: 808, y: 788, a: -82 },
  { t: "3rd St NW", x: 767, y: 950, a: -82 },
  { t: "Edith Blvd", x: 964, y: 426, a: -82 },
  { t: "SW", x: 687, y: 1006, a: -82 },
  { t: "SW", x: 756, y: 1019, a: -82 },
  { t: "SE", x: 828, y: 1015, a: -82 },
  { t: "Los Arboles Ave NE", x: 1315, y: 545, size: 18, fill: "#3d382c" },
  { t: "Phoenix Ave NE", x: 1316, y: 597, size: 18, fill: "#3d382c" },
  { t: "Coronado Center", x: 1478, y: 655, size: 22, fill: "#2f3261" },
];

const curved: { t: string; d: string; size?: number; fill?: string; halo?: string }[] = [
  { t: "Candelaria Rd NW", d: "M500 407L600 419L700 427" },
  { t: "Comanche Rd NE", d: "M1629 397L1662 413Q1690 420 1720 419L1750 417L1820 436" },
  { t: "Candelaria Rd NE", d: "M903 503L990 533L1090 561" },
  { t: "Menaul Blvd NE", d: "M902 613L965 622Q990 625 1070 625" },
  { t: "Atrisco Dr NW", d: "M192 750L228 810L300 905" },
  { t: "Mountain Rd NW", d: "M538 773Q570 797 610 802L720 825" },
  { t: "Tingley Dr SW", d: "M429 896L532 1008" },
  { t: "Lomas Blvd NE", d: "M973 869Q1010 875 1040 889L1130 938" },
  { t: "Las Lomas Rd NE", d: "M976 914L1010 928Q1040 940 1070 942H1170" },
  { t: "Matthew Ave NW", d: "M484 494L530 499Q545 500 560 491L650 488", size: 18, fill: "#3d382c" },
  { t: "Coronado Fwy", d: "M1496 702Q1530 708 1560 721L1680 778", size: 21, fill: "#6d3d02", halo: "#ffc888" },
];

function Shield({ x, y, n }: { x: number; y: number; n: string }) {
  return (
    <g transform={`translate(${x - 16} ${y - 16})`}>
      <path d="M2 0Q5 3 9 1L16 0L23 1Q27 3 30 0L32 6H0Z" fill="#d9605d" />
      <path d="M1 6H31V8H1Z" fill="#fff" />
      <path d="M0 8H32Q33 27 16 32Q-1 27 0 8Z" fill="#3a78c8" />
      <text x="16" y="24" textAnchor="middle" fontSize="18" fontWeight="700" fill="#fff">
        {n}
      </text>
    </g>
  );
}

function BusStop({ x, y }: { x: number; y: number }) {
  return (
    <g transform={`translate(${x} ${y})`}>
      <rect y="1" width="16" height="17" rx="1" fill="#9a9a94" />
      <rect width="16" height="16" rx="1" fill="#0bacff" />
      <path d="M4 2H12L13 3V11H3V3ZM5 4V8H11V4ZM3 12H5V14H3ZM11 12H13V14H11Z" fill="#fff" fillRule="evenodd" />
    </g>
  );
}

function CityMap() {
  return (
    <svg
      className="block h-[600px] w-full"
      viewBox="192 408 1900 600"
      preserveAspectRatio="xMidYMid slice"
      fontFamily="Roboto, sans-serif"
      role="img"
      aria-label="Street map of Albuquerque"
    >
      <defs>
        <linearGradient id="pin" x1="0" y1="0" x2="0" y2="1">
          <stop offset="0" stopColor="#fb7268" />
          <stop offset="1" stopColor="#ee3a30" />
        </linearGradient>
        {curved.map((c, i) => (
          <path key={i} id={`road-${i}`} d={c.d} />
        ))}
      </defs>
      <rect x="192" y="408" width="1900" height="600" fill="#e8e4dc" />
      <g transform="translate(180 400) scale(0.333333)">
        {areaFills.map(([k, fill]) => (
          <g key={k} fill={fill}>
            {sheets.map((s, i) =>
              s[k] ? <path key={i} d={s[k]} transform={`translate(${(s.x - 180) * 3} ${(s.y - 400) * 3})`} /> : null,
            )}
          </g>
        ))}
        <path d="M870 1630L900 1620L940 1680L1000 1750L1022 1792Z" fill="#fbeab2" />
        <path d="M930 1665L968 1690L965 1720L938 1700ZM985 1740L1020 1788L1000 1775Z" fill="#91b8ff" />
        <path d="M2890 1735H2968V1824H2894Z" fill="#eee3d2" />
        <path d="M4480 1824V1700Q4525 1675 4565 1720" fill="none" stroke="#eee3d2" strokeWidth="14" />
        <Lines k="canal" stroke="#94bbfb" w={4} />
        <Lines k="minor" stroke="#d6d1c6" w={4} />
        <Lines k="rail" stroke="#b9b8b6" w={4} />
        <Lines k="thin" stroke="#d3cec3" w={15} />
        <Lines k="mid" stroke="#d3cec3" w={19} />
        <Lines k="wide" stroke="#d3cec3" w={25} />
        <g fill="none" strokeLinejoin="round">
          <path d={PALE_RAMPS} stroke="#ffdf97" strokeWidth="14" />
          <path d={RAMPS} stroke="#f3a51f" strokeWidth="18" />
          <path d={RAMPS} stroke="#ffc64f" strokeWidth="11" />
        </g>
        <Lines k="thin" stroke="#fff" w={8} />
        <Lines k="mid" stroke="#fff" w={12} />
        <Lines k="wide" stroke="#fff" w={17} />
        <g fill="none" strokeLinejoin="round">
          <path d={I40} stroke="#e59108" strokeWidth="32" />
          <path d={I40_EAST} stroke="#e59108" strokeWidth="38" />
          <path d={I25} stroke="#e59108" strokeWidth="34" />
          <path d={I40} stroke="#fb9e25" strokeWidth="23" />
          <path d={I40_EAST} stroke="#fb9e25" strokeWidth="28" />
          <path d={I25} stroke="#fb9e25" strokeWidth="24" />
          <path d={I40_EAST} stroke="#e59108" strokeWidth="3" />
        </g>
      </g>

      <g strokeWidth="5" strokeLinejoin="round" paintOrder="stroke" stroke="#f1eee8" strokeOpacity="0.85">
        {labels.map((l, i) => (
          <text
            key={i}
            fontSize={l.size ?? 20}
            fill={l.fill ?? roadInk}
            transform={`translate(${l.x} ${l.y}) rotate(${l.a ?? 0})`}
          >
            {l.t}
          </text>
        ))}
        {curved.map((c, i) => (
          <text key={i} fontSize={c.size ?? 20} fill={c.fill ?? roadInk} stroke={c.halo ?? "#f1eee8"}>
            <textPath href={`#road-${i}`}>{c.t}</textPath>
          </text>
        ))}
        <g fontSize="20" fontStyle="italic" fontWeight="500" fill="#9d9270">
          <text x="1616" y="785">
            UPTOWN
          </text>
          <text x="1091" y="967" textAnchor="middle">
            CENTRAL
          </text>
          <text x="1091" y="987" textAnchor="middle">
            CAMPUS
          </text>
        </g>
        <text x="1140" y="971" fontSize="42" fontWeight="500" fill="#5f4e28" className="tracking-widest">
          Albuquerque
        </text>
      </g>

      <Shield x={227} y={654} n="40" />
      <Shield x={815} y={667} n="40" />
      <Shield x={1043} y={662} n="40" />
      <Shield x={1001} y={681} n="25" />
      <Shield x={1838} y={845} n="40" />
      <rect x="840" y="767" width="32" height="26" rx="13" fill="#fff" stroke="#636363" strokeWidth="2" />
      <text x="856" y="786" fontSize="18" textAnchor="middle" fill="#333">
        47
      </text>
      <BusStop x={402} y={854} />
      <BusStop x={785} y={976} />

      <circle cx="1661" cy="648" r="13" fill="#bdb9b2" />
      <circle cx="1661" cy="647" r="13" fill="#fff" />
      <rect x="1654" y="645" width="14" height="9" fill="#6676cc" />
      <path d="M1657 645V643Q1657 640 1661 640T1665 643V645" fill="none" stroke="#6676cc" strokeWidth="2" />
      <path d="M1657 648Q1661 654 1665 648" fill="none" stroke="#fff" strokeWidth="2" />

      <path
        d="M1097 557C1096 537 1089 529 1083 520C1078 512 1076 507 1076 500A21 21 0 0 1 1118 500C1118 507 1116 512 1111 520C1105 529 1098 537 1097 557Z"
        fill="url(#pin)"
        stroke="#b7352e"
        strokeWidth="2"
      />
      <circle cx="1097" cy="500" r="7" fill="#590f0b" />
    </svg>
  );
}

function GoogleLogo() {
  const letters: [string, string][] = [
    ["G", "#4285f4"],
    ["o", "#ea4335"],
    ["o", "#fbbc05"],
    ["g", "#4285f4"],
    ["l", "#34a853"],
    ["e", "#ea4335"],
  ];
  return (
    <svg
      className="block h-12 w-[132px] [filter:drop-shadow(0_0_2px_rgba(255,255,255,0.7))]"
      viewBox="0 0 132 48"
      role="img"
      aria-label="Google"
    >
      <text x="1" y="33" fontFamily="Lato, sans-serif" fontSize="41" strokeWidth="1">
        {letters.map(([c, fill], i) => (
          <tspan key={i} fill={fill} stroke={fill}>
            {c}
          </tspan>
        ))}
      </text>
    </svg>
  );
}

function Pegman() {
  return (
    <svg className="h-[40px] w-[24px]" viewBox="0 0 24 40" aria-hidden="true">
      <g fill="#fbbc2d" stroke="#6b6146" strokeWidth="1">
        <path d="M5 14H19L23 27L20 28L18 23V38H13V28H11V38H6V23L4 28L1 27Z" />
        <circle cx="12" cy="8" r="7" />
      </g>
      <path d="M7 14H17L12 21Z" fill="#e27b1b" />
    </svg>
  );
}

function PhoneIcon() {
  return (
    <svg className="size-[22px] self-center" viewBox="192 128 1408 1408" fill="currentColor" aria-label="Phone">
      <path d="M1600 1240q0 27-10 70.5t-21 68.5q-21 50-122 106-94 51-186 51-27 0-53-3.5t-57.5-12.5-47-14.5-55.5-20.5-49-18q-98-35-175-83-127-79-264-216t-216-264q-48-77-83-175-3-9-18-49t-20.5-55.5-14.5-47-12.500-57.5-3.5-53q0-92 51-186 56-101 106-122 25-11 68.5-21t70.5-10q14 0 21 3 18 6 53 76 11 19 30 54t35 63.5 31 53.5q3 4 17.5 25t21.5 35.5 7 28.5q0 20-28.5 50t-62 55-62 53-28.5 46q0 9 5 22.5t8.500 20.5 14 24 11.500 19q76 137 174 235t235 174q2 1 19 11.5t24 14 20.5 8.5 22.5 5q18 0 46-28.5t53-62 55-62 50-28.5q14 0 28.5 7t35.5 21.5 25 17.5q25 15 53.5 31t63.5 35 54 30q70 35 76 53 3 7 3 21z" />
    </svg>
  );
}

function EnvelopeIcon() {
  return (
    <svg className="h-[22px] w-7 self-center" viewBox="0 256 1792 1408" fill="currentColor" aria-label="Email">
      <path d="M1792 710v794q0 66-47 113t-113 47h-1472q-66 0-113-47t-47-113v-794q44 49 101 87 362 246 497 345 57 42 92.5 65.5t94.5 48 110 24.5h2q51 0 110-24.5t94.5-48 92.5-65.5q170-123 498-345 57-39 100-87zm0-294q0 79-49 151t-122 123q-376 261-468 325-10 7-42.5 31t-54 38.5-52 32.5-57.5 27-50 9h-2q-23 0-50-9t-57.5-27-52-32.5-54-38.5-42.5-31q-91-64-262-182.5t-205-142.5q-62-42-117-115.5t-55-136.5q0-78 41.5-130t118.5-52h1472q65 0 112.5 47t47.5 113z" />
    </svg>
  );
}

export default function App() {
  return (
    <main className="h-screen overflow-hidden bg-white pr-[14px] pl-[2px] font-['Liberation_Sans',Arial,sans-serif] text-[28px] leading-[40px] text-[#333]">
      <section className="px-[30px]">
        <h2 className="text-[47px] leading-[40px] font-bold">Contact Us</h2>
        <div className="mt-6 flex items-center">
          <PhoneIcon />
          <p>: +852 1234 5678</p>
          <span className="ml-6 flex items-center">
            <EnvelopeIcon />
            <p>
              :{" "}
              <a href="mailto:aaokhao@food.net" className="text-[#008000]">
                aaokhao@food.net
              </a>
            </p>
          </span>
        </div>
        <h3 className="mt-4 text-[27px] leading-[40px] font-bold">Our Address</h3>
        <address className="mt-[14px] not-italic">67 Glenret way, Albuquerque,New Mexico</address>
        <hr className="mt-10 border-t-2 border-[#eee]" />
      </section>

      <section className="px-[30px] pt-[88px]">
        <h2 className="text-[47px] leading-[40px] font-bold">Location Information</h2>
      </section>
      <div className="relative mx-auto mt-6 w-10/12 overflow-hidden font-[Roboto,sans-serif]">
        <CityMap />
        <div className="absolute top-5 left-5 flex rounded-[4px] bg-white text-[22px] leading-[62px] shadow-[0_2px_8px_rgba(0,0,0,0.3)]">
          <button type="button" className="px-4 font-medium text-black">
            Map
          </button>
          <button type="button" className="border-l border-[#e4e4e4] px-[15px] text-[#565656]">
            Satellite
          </button>
        </div>
        <div className="absolute right-5 bottom-12 flex w-14 flex-col gap-5">
          <button
            type="button"
            aria-label="Street View"
            className="flex h-14 items-center justify-center rounded-[4px] bg-white shadow-[0_2px_8px_rgba(0,0,0,0.3)]"
          >
            <Pegman />
          </button>
          <div className="flex h-[110px] flex-col rounded-[4px] bg-white px-2 shadow-[0_2px_8px_rgba(0,0,0,0.3)]">
            <button type="button" aria-label="Zoom in" className="flex flex-1 items-center justify-center border-b-2 border-[#e6e6e6]">
              <svg className="h-[22px] w-[22px]" viewBox="0 0 22 22" aria-hidden="true">
                <path d="M8 0H14V8H22V14H14V22H8V14H0V8H8Z" fill="#666" />
              </svg>
            </button>
            <button type="button" aria-label="Zoom out" className="flex flex-1 items-center justify-center">
              <svg className="h-[22px] w-[22px]" viewBox="0 0 22 22" aria-hidden="true">
                <path d="M0 8H22V14H0Z" fill="#666" />
              </svg>
            </button>
          </div>
        </div>
        <div className="absolute bottom-0 left-3">
          <GoogleLogo />
        </div>
        <div className="absolute right-0 bottom-0 flex divide-x divide-[#e2e0dc] bg-[#f5f5f5]/75 text-[20px] leading-[28px] text-[#444]">
          <span className="px-[11px]">Map data ©2016 Google</span>
          <a href="#terms" className="px-[11px]">
            Terms of Use
          </a>
          <a href="#report" className="pr-3 pl-[11px]">
            Report a map error
          </a>
        </div>
      </div>

      <hr className="mt-[100px] border-t-2 border-[#eee]" />

      <section className="px-[30px] pt-[148px]">
        <h2 className="text-[47px] leading-[40px] font-bold">Send us your Feedback</h2>
      </section>
      <form className="mt-6 ml-[314px] w-3/5">
        <input
          type="text"
          aria-label="Name"
          className="block h-[68px] w-full rounded-[8px] border-2 border-[#ccc] px-6 shadow-[inset_0_2px_2px_rgba(0,0,0,0.075)]"
        />
      </form>
    </main>
  );
}
